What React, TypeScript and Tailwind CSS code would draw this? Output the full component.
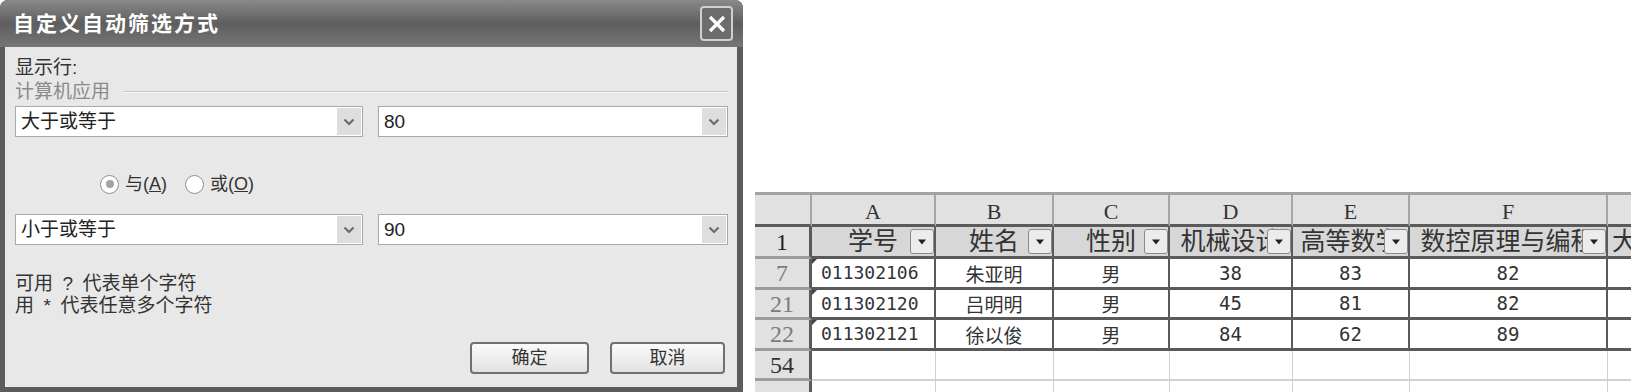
// Custom AutoFilter dialog next to a filtered worksheet.

const font = "font-['Liberation_Sans','Noto_Sans_CJK_SC',sans-serif]";

function Chevron() {
  return (
    <svg width="12" height="8" viewBox="0 0 12 8" fill="none">
      <path d="M1.5 1.5 L6 6 L10.5 1.5" stroke="#6b6b6b" strokeWidth="2.2" />
    </svg>
  );
}

function Combo({ value, wide }: { value: string; wide?: boolean }) {
  return (
    <div
      className={
        wide
          ? "flex h-[31px] w-[350px] items-center border border-[#a9a9a9] bg-white p-[1px]"
          : "flex h-[31px] w-[348px] items-center border border-[#a9a9a9] bg-white p-[1px]"
      }
    >
      <span className="flex-1 pl-[4px] text-[19px] leading-none text-[#222]">{value}</span>
      <span className="flex h-full w-[24px] items-center justify-center bg-[#dedede]">
        <Chevron />
      </span>
    </div>
  );
}

function Radio({ checked, label, hot }: { checked?: boolean; label: string; hot: string }) {
  return (
    <div className="flex items-center gap-[6px]">
      <span className="flex h-[19px] w-[19px] items-center justify-center rounded-full border-[1.5px] border-[#8e8e8e] bg-white">
        {checked && <span className="h-[8px] w-[8px] rounded-full bg-[#a4a4a4]" />}
      </span>
      <span className="text-[18px] leading-none text-[#333]">
        {label}(<span className="underline">{hot}</span>)
      </span>
    </div>
  );
}

function Dialog() {
  return (
    <div className="flex h-[392px] w-[743px] shrink-0 flex-col overflow-hidden rounded-t-[8px] bg-[#5c5c5c]">
      <div className="flex h-[47px] items-center justify-between bg-linear-to-b from-[#8a8a8a] via-[#5e5e5e] to-[#767676] pl-[13px] pr-[10px]">
        <span className="text-[21px] font-bold tracking-[2px] text-white">自定义自动筛选方式</span>
        <span className="flex h-[35px] w-[33px] items-center justify-center rounded-[4px] border-2 border-[#cfcfcf] bg-[#6c6c6c]">
          <svg width="20" height="20" viewBox="0 0 20 20">
            <path d="M3 3 L17 17 M17 3 L3 17" stroke="#fff" strokeWidth="3.2" />
          </svg>
        </span>
      </div>
      <div className="mb-[5px] ml-[5px] mr-[6px] flex flex-1 flex-col bg-[#e8e8e8] pl-[10px] pr-[9px] pt-[9px] text-[#333]">
        <div className="text-[19px] leading-[24px]">显示行:</div>
        <div className="flex h-[22px] items-center gap-[14px]">
          <span className="text-[19px] leading-none text-[#8a8a8a]">计算机应用</span>
          <span className="mt-[2px] h-[2px] flex-1 border-t border-b border-t-[#c4c4c4] border-b-[#f8f8f8]" />
        </div>
        <div className="mt-[4px] flex gap-[15px]">
          <Combo value="大于或等于" />
          <Combo value="80" wide />
        </div>
        <div className="ml-[85px] mt-[35px] flex h-[24px] items-center gap-[18px]">
          <Radio checked label="与" hot="A" />
          <Radio label="或" hot="O" />
        </div>
        <div className="mt-[18px] flex gap-[15px]">
          <Combo value="小于或等于" />
          <Combo value="90" wide />
        </div>
        <div className="mt-[28px] text-[19px] leading-[22px]">可用&ensp;?&ensp;代表单个字符</div>
        <div className="text-[19px] leading-[22px]">用&ensp;*&ensp;代表任意多个字符</div>
        <div className="mr-[3px] mt-[25px] flex justify-end gap-[21px]">
          <button className="h-[32px] w-[119px] rounded-[4px] border-2 border-[#707070] bg-linear-to-b from-[#fafafa] to-[#e2e2e2] text-[18px] text-[#333]">
            确定
          </button>
          <button className="h-[32px] w-[115px] rounded-[4px] border-2 border-[#707070] bg-linear-to-b from-[#fafafa] to-[#e2e2e2] text-[18px] text-[#333]">
            取消
          </button>
        </div>
      </div>
    </div>
  );
}

const headers = ["学号", "姓名", "性别", "机械设计", "高等数学", "数控原理与编程"];

const rows = [
  { n: "7", cells: ["011302106", "朱亚明", "男", "38", "83", "82"] },
  { n: "21", cells: ["011302120", "吕明明", "男", "45", "81", "82"] },
  { n: "22", cells: ["011302121", "徐以俊", "男", "84", "62", "89"] },
];

function FilterButton() {
  return (
    <span className="absolute right-0 top-[2px] flex h-[25px] w-[24px] items-center justify-center rounded-[3px] border border-[#8a8a8a] bg-[#ececec]">
      <svg width="10" height="6" viewBox="0 0 10 6">
        <path d="M1 0.5 L9 0.5 L5 5.5 Z" fill="#222" />
      </svg>
    </span>
  );
}

const colHead =
  "flex items-end justify-center border-b-[3px] border-r-2 border-b-[#5a5a5a] border-r-[#a6a6a6] bg-[#e1e1e1] pb-[1px] font-['Liberation_Serif',serif] text-[22px] leading-none text-[#333]";
const rowHead =
  "flex items-center justify-center border-b-[3px] border-r-[3px] border-b-[#9c9c9c] border-r-[#5a5a5a] bg-[#e1e1e1] font-['Liberation_Serif',serif] text-[24px] leading-none";
const dataCell =
  "relative flex items-center justify-center overflow-hidden border-b-[3px] border-r-2 border-[#5a5a5a] bg-white text-[19px] leading-none text-[#333]";
const emptyCell = "border-b-2 border-r border-b-[#d2d2d2] border-r-[#cfcfcf] bg-white";

function Sheet() {
  return (
    <div className="ml-[12px] mt-[192px] h-[200px] flex-1 overflow-hidden border-t-[3px] border-[#a3a3a3]">
      <div className="grid w-[900px] grid-cols-[57px_124px_118px_116px_123px_117px_198px_47px] grid-rows-[32px_32px_31px_30px_31px_30px_11px]">
        <div className="border-b-[3px] border-r-2 border-b-[#5a5a5a] border-r-[#a6a6a6] bg-[#e1e1e1]" />
        {["A", "B", "C", "D", "E", "F", "G"].map((c) => (
          <div key={c} className={colHead}>
            {c === "G" ? "" : c}
          </div>
        ))}

        <div className={rowHead + " text-[#222]"}>1</div>
        {headers.map((h) => (
          <div
            key={h}
            className="relative flex items-center justify-center overflow-hidden border-b-[3px] border-r-2 border-[#5a5a5a] bg-[#d7d7d7]"
          >
            <span className="whitespace-nowrap text-[25px] leading-none text-[#333]">{h}</span>
            <FilterButton />
          </div>
        ))}
        <div className="flex items-center overflow-hidden border-b-[3px] border-[#5a5a5a] bg-[#d7d7d7] pl-[4px]">
          <span className="whitespace-nowrap text-[25px] leading-none text-[#333]">大学英语</span>
        </div>

        {rows.map((r) => (
          <div key={r.n} className="contents">
            <div className={rowHead + " text-[#7c7c7c]"}>{r.n}</div>
            {r.cells.map((v, i) =>
              i === 0 ? (
                <div
                  key={i}
                  className="relative flex items-center overflow-hidden border-b-[3px] border-r-2 border-[#5a5a5a] bg-white pl-[9px] font-['DejaVu_Sans_Mono',monospace] text-[18px] leading-none text-[#333]"
                >
                  <span className="absolute left-0 top-0 h-0 w-0 border-r-[5px] border-t-[5px] border-r-transparent border-t-[#444]" />
                  {v}
                </div>
              ) : (
                <div
                  key={i}
                  className={
                    i >= 3
                      ? dataCell + " font-['DejaVu_Sans_Mono',monospace] text-[18px]"
                      : dataCell + " font-['Noto_Sans_CJK_SC',sans-serif]"
                  }
                >
                  {v}
                </div>
              )
            )}
            <div className="border-b-[3px] border-[#5a5a5a] bg-white" />
          </div>
        ))}

        <div className={rowHead + " text-[#333]"}>54</div>
        {[0, 1, 2, 3, 4, 5, 6].map((i) => (
          <div key={i} className={emptyCell} />
        ))}
        <div className="border-r-[3px] border-r-[#5a5a5a] bg-[#e1e1e1]" />
        {[0, 1, 2, 3, 4, 5, 6].map((i) => (
          <div key={i} className="border-r border-r-[#cfcfcf] bg-white" />
        ))}
      </div>
    </div>
  );
}

export default function App() {
  return (
    <div className={"flex h-[392px] w-[1631px] overflow-hidden bg-white " + font}>
      <Dialog />
      <Sheet />
    </div>
  );
}
